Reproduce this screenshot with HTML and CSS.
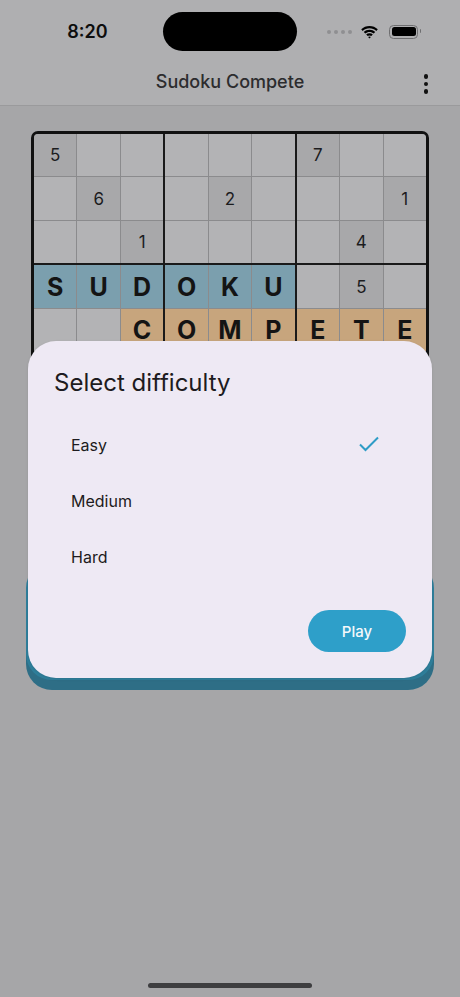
FILE: index.html
```html
<!DOCTYPE html>
<html lang="en">
<head>
<meta charset="utf-8">
<title>Sudoku Compete</title>
<link rel="stylesheet" href="styles.css">
</head>
<body>
<div class="screen">
  <div class="top">
    <div class="status">
      <div class="time">8:20</div>
      <div class="island"></div>
      <div class="status-icons">
        <div class="dots"><span></span><span></span><span></span><span></span></div>
        <svg class="wifi" width="19" height="14" viewBox="0 0 19 14">
          <path d="M9.5 3.2c2.6 0 5 1 6.8 2.7l1.5-1.6C15.6 2.2 12.7 1 9.5 1S3.4 2.2 1.2 4.3l1.5 1.6C4.5 4.2 6.9 3.2 9.5 3.2z" fill="#000"/>
          <path d="M9.5 6.9c1.6 0 3.1.6 4.2 1.6l1.5-1.6C13.7 5.5 11.7 4.7 9.5 4.7S5.3 5.5 3.8 6.9l1.5 1.6c1.1-1 2.6-1.6 4.2-1.6z" fill="#000"/>
          <path d="M9.5 10.4c.7 0 1.3.3 1.8.7l1.5-1.6c-.9-.8-2-1.2-3.3-1.2s-2.4.4-3.3 1.2l1.5 1.6c.5-.4 1.1-.7 1.8-.7z" fill="#000"/>
          <path d="M9.5 13.6l1.4-1.5c-.4-.3-.9-.5-1.4-.5s-1 .2-1.4.5z" fill="#000"/>
        </svg>
        <div class="battery"><div class="battery-fill"></div></div>
      </div>
    </div>
    <div class="appbar">
      <div class="appbar-title">Sudoku Compete</div>
      <div class="menu"><span></span><span></span><span></span></div>
    </div>
  </div>

  <div class="board">
    <div class="box">
      <div class="cell given">5</div><div class="cell"></div><div class="cell"></div>
      <div class="cell"></div><div class="cell given">6</div><div class="cell"></div>
      <div class="cell"></div><div class="cell"></div><div class="cell given">1</div>
    </div>
    <div class="box">
      <div class="cell"></div><div class="cell"></div><div class="cell"></div>
      <div class="cell"></div><div class="cell given">2</div><div class="cell"></div>
      <div class="cell"></div><div class="cell"></div><div class="cell"></div>
    </div>
    <div class="box">
      <div class="cell given">7</div><div class="cell"></div><div class="cell"></div>
      <div class="cell"></div><div class="cell"></div><div class="cell given">1</div>
      <div class="cell"></div><div class="cell given">4</div><div class="cell"></div>
    </div>
    <div class="box">
      <div class="cell blue letter">S</div><div class="cell blue letter">U</div><div class="cell blue letter">D</div>
      <div class="cell"></div><div class="cell"></div><div class="cell orange letter">C</div>
      <div class="cell"></div><div class="cell"></div><div class="cell"></div>
    </div>
    <div class="box">
      <div class="cell blue letter">O</div><div class="cell blue letter">K</div><div class="cell blue letter">U</div>
      <div class="cell orange letter">O</div><div class="cell orange letter">M</div><div class="cell orange letter">P</div>
      <div class="cell"></div><div class="cell"></div><div class="cell"></div>
    </div>
    <div class="box">
      <div class="cell"></div><div class="cell given">5</div><div class="cell"></div>
      <div class="cell orange letter">E</div><div class="cell orange letter">T</div><div class="cell orange letter">E</div>
      <div class="cell"></div><div class="cell"></div><div class="cell"></div>
    </div>
    <div class="box">
      <div class="cell"></div><div class="cell"></div><div class="cell"></div>
      <div class="cell"></div><div class="cell"></div><div class="cell"></div>
      <div class="cell"></div><div class="cell"></div><div class="cell"></div>
    </div>
    <div class="box">
      <div class="cell"></div><div class="cell"></div><div class="cell"></div>
      <div class="cell"></div><div class="cell"></div><div class="cell"></div>
      <div class="cell"></div><div class="cell"></div><div class="cell"></div>
    </div>
    <div class="box">
      <div class="cell"></div><div class="cell"></div><div class="cell"></div>
      <div class="cell"></div><div class="cell"></div><div class="cell"></div>
      <div class="cell"></div><div class="cell"></div><div class="cell"></div>
    </div>
  </div>

  <div class="play-main"></div>

  <div class="home-indicator"></div>

  <div class="dialog">
    <div class="dialog-title">Select difficulty</div>
    <div class="options">
      <div class="option">
        <span>Easy</span>
        <svg class="check" width="22" height="16" viewBox="0 0 22 16">
          <path d="M2 8.5l5.5 5.5L20 1.5" fill="none" stroke="#2e9cc6" stroke-width="2"/>
        </svg>
      </div>
      <div class="option"><span>Medium</span></div>
      <div class="option"><span>Hard</span></div>
    </div>
    <div class="actions">
      <div class="play-btn">Play</div>
    </div>
  </div>
</div>
</body>
</html>
```

FILE: styles.css
```css
* { box-sizing: border-box; }

html, body {
  margin: 0;
  padding: 0;
}

body {
  width: 460px;
  height: 997px;
  background: #a6a6a8;
  font-family: Inter, "Noto Sans", sans-serif;
  overflow: hidden;
}

.screen {
  position: relative;
  width: 460px;
  height: 997px;
  display: flex;
  flex-direction: column;
}

.top {
  background: #afafb1;
  border-bottom: 1px solid #9a9a9c;
}

.status {
  height: 58px;
  padding-top: 12px;
  display: flex;
  align-items: flex-start;
  position: relative;
}

.time {
  width: 163px;
  height: 39px;
  line-height: 40px;
  text-align: center;
  font-size: 18px;
  font-weight: 600;
  color: #0d0d0d;
  padding-left: 12px;
}

.island {
  width: 134px;
  height: 39px;
  background: #000;
  border-radius: 20px;
}

.status-icons {
  flex: 1;
  height: 39px;
  display: flex;
  align-items: center;
  padding-left: 30px;
}

.dots {
  display: flex;
  gap: 3px;
}

.dots span {
  width: 4px;
  height: 4px;
  border-radius: 50%;
  background: #8f8f92;
}

.wifi {
  margin-left: 8px;
}

.battery {
  margin-left: 10px;
  width: 29px;
  height: 14px;
  border: 1.5px solid #6e6e70;
  border-radius: 4.5px;
  padding: 1.5px;
  position: relative;
}

.battery::after {
  content: "";
  position: absolute;
  right: -4px;
  top: 3.5px;
  width: 1.5px;
  height: 4px;
  background: #6e6e70;
  border-radius: 0 1px 1px 0;
}

.battery-fill {
  width: 100%;
  height: 100%;
  background: #000;
  border-radius: 2.5px;
}

.appbar {
  height: 47px;
  display: flex;
  align-items: center;
  justify-content: center;
  position: relative;
}

.appbar-title {
  font-size: 18px;
  font-weight: 500;
  color: #2c2c2e;
  padding-bottom: 1px;
}

.menu {
  position: absolute;
  right: 32px;
  top: 16px;
  display: flex;
  flex-direction: column;
  gap: 3px;
}

.menu span {
  width: 4.5px;
  height: 4.5px;
  border-radius: 50%;
  background: #111;
}

.board {
  margin: 25px 0 0 31px;
  width: 398px;
  height: 398px;
  border: 3px solid #111;
  border-radius: 7px;
  background: #1a1a1a;
  display: grid;
  grid-template-columns: repeat(3, 1fr);
  grid-template-rows: repeat(3, 1fr);
  gap: 2px;
  overflow: hidden;
}

.box {
  display: grid;
  grid-template-columns: repeat(3, 1fr);
  grid-template-rows: repeat(3, 1fr);
  gap: 1px;
  background: #8b8b8d;
}

.cell {
  background: #b3b3b5;
  display: flex;
  align-items: center;
  justify-content: center;
  font-size: 17px;
  color: #1c1c1e;
}

.cell.given {
  background: #a8a8aa;
}

.cell.blue {
  background: #7b9fae;
}

.cell.orange {
  background: #c7a57d;
}

.cell.letter {
  font-size: 25px;
  font-weight: 700;
  color: #141414;
}

.play-main {
  margin: 33px 0 0 26px;
  width: 408px;
  height: 118px;
  border-radius: 26px;
  background: #2f7f9b;
  box-shadow: 0 10px 0 #2e6e86;
}

.home-indicator {
  position: absolute;
  left: 148px;
  bottom: 9px;
  width: 164px;
  height: 5px;
  border-radius: 3px;
  background: #3e3e40;
}

.dialog {
  position: absolute;
  left: 28px;
  top: 341px;
  width: 404px;
  height: 337px;
  border-radius: 28px;
  background: #eee9f4;
  padding: 26px 26px 26px 26px;
  display: flex;
  flex-direction: column;
  box-shadow: 0 1px 3px rgba(0, 0, 0, 0.1);
}

.dialog-title {
  font-size: 24px;
  line-height: 32px;
  color: #1d1b20;
  font-weight: 400;
}

.options {
  margin-top: 18px;
  display: flex;
  flex-direction: column;
}

.option {
  height: 56px;
  display: flex;
  align-items: center;
  justify-content: space-between;
  padding: 0 26px 0 17px;
  font-size: 16px;
  color: #1d1b20;
}

.check {
  margin-top: -2px;
}

.actions {
  margin-top: auto;
  display: flex;
  justify-content: flex-end;
}

.play-btn {
  width: 98px;
  height: 42px;
  border-radius: 21px;
  background: #2e9fc9;
  color: #f4f8fb;
  font-size: 15px;
  font-weight: 500;
  display: flex;
  align-items: center;
  justify-content: center;
}
```
